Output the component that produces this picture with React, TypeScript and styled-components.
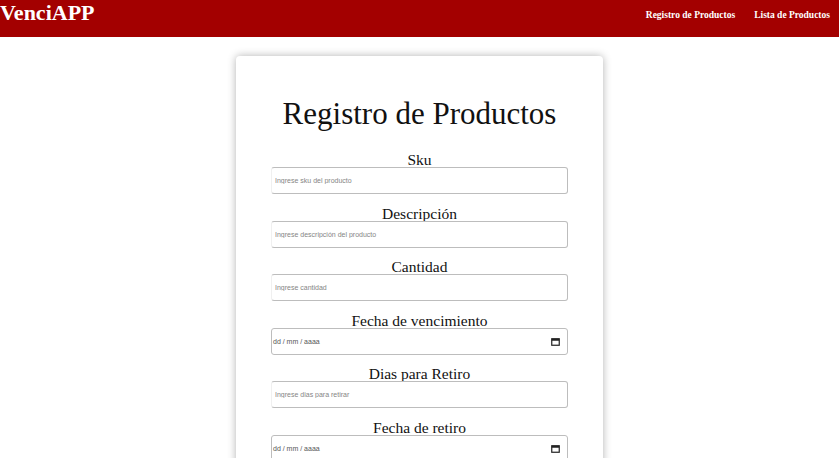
import React from "react";
import styled, { createGlobalStyle } from "styled-components";

const Global = createGlobalStyle`
  html, body { margin: 0; padding: 0; background: #ffffff; }
  body { font-family: "Liberation Serif", serif; }
  * { box-sizing: border-box; }
`;

const Header = styled.header`
  height: 37px;
  background: #a30000;
  display: flex;
  align-items: flex-start;
  justify-content: space-between;
  color: #ffffff;
`;

const Brand = styled.div`
  font-family: "Liberation Serif", serif;
  font-weight: bold;
  font-size: 22px;
  line-height: 26px;
`;

const Nav = styled.nav`
  display: flex;
  gap: 19px;
  padding-right: 9px;
  padding-top: 9px;
`;

const NavLink = styled.a`
  font-family: "Liberation Serif", serif;
  font-weight: bold;
  font-size: 9.5px;
  line-height: 12px;
  color: #ffffff;
  text-decoration: none;
`;

const Main = styled.main`
  display: flex;
  justify-content: center;
  padding-top: 19px;
  padding-bottom: 30px;
`;

const Card = styled.section`
  width: 367px;
  background: #ffffff;
  border-radius: 4px;
  box-shadow: 0 0 8px rgba(0, 0, 0, 0.3);
  padding: 40px 35px 40px;
  display: flex;
  flex-direction: column;
`;

const Title = styled.h1`
  margin: 0 0 21px;
  font-family: "Liberation Serif", serif;
  font-weight: normal;
  font-size: 31px;
  line-height: 36px;
  text-align: center;
  color: #111111;
  white-space: nowrap;
`;

const Field = styled.div`
  display: flex;
  flex-direction: column;
  margin-bottom: 12.6px;
`;

const Label = styled.label`
  font-family: "Liberation Serif", serif;
  font-size: 15.5px;
  line-height: 14px;
  text-align: center;
  color: #111111;
`;

const Input = styled.input`
  width: 100%;
  height: 27px;
  border: 1px solid #bdbdbd;
  border-left-color: #f0f0f0;
  border-radius: 3px;
  padding: 0 3px;
  font-family: "Liberation Sans", Arial, sans-serif;
  font-size: 7px;
  color: #222;
  outline: none;
  &::placeholder { color: #858585; }
`;

const DateBox = styled.div`
  width: 100%;
  height: 27px;
  border: 1px solid #bdbdbd;
  border-radius: 3px;
  padding: 0 7px 0 1px;
  display: flex;
  align-items: center;
  justify-content: space-between;
  font-family: "Liberation Sans", Arial, sans-serif;
  font-size: 7px;
  color: #555;
`;

const Calendar = () => (
  <svg width="9" height="9" viewBox="0 0 9 9">
    <rect x="0.75" y="1.75" width="7.5" height="6.5" fill="none" stroke="#222" strokeWidth="1.2" />
    <rect x="0.75" y="1.75" width="7.5" height="2" fill="#222" />
  </svg>
);

const fields: { label: string; placeholder?: string; date?: boolean }[] = [
  { label: "Sku", placeholder: "Ingrese sku del producto" },
  { label: "Descripción", placeholder: "Ingrese descripción del producto" },
  { label: "Cantidad", placeholder: "Ingrese cantidad" },
  { label: "Fecha de vencimiento", date: true },
  { label: "Dias para Retiro", placeholder: "Ingrese dias para retirar" },
  { label: "Fecha de retiro", date: true },
];

export default function App() {
  return (
    <>
      <Global />
      <Header>
        <Brand>VenciAPP</Brand>
        <Nav>
          <NavLink href="#">Registro de Productos</NavLink>
          <NavLink href="#">Lista de Productos</NavLink>
        </Nav>
      </Header>
      <Main>
        <Card>
          <Title>Registro de Productos</Title>
          {fields.map((f) => (
            <Field key={f.label}>
              <Label>{f.label}</Label>
              {f.date ? (
                <DateBox>
                  <span>dd / mm / aaaa</span>
                  <Calendar />
                </DateBox>
              ) : (
                <Input placeholder={f.placeholder} />
              )}
            </Field>
          ))}
        </Card>
      </Main>
    </>
  );
}
